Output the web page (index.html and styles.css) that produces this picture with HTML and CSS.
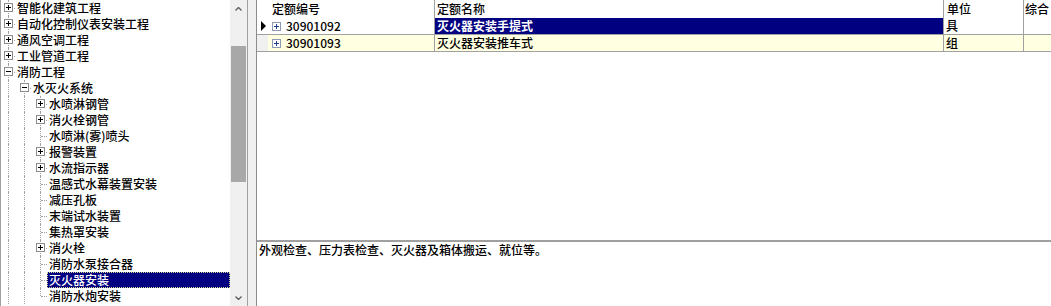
FILE: index.html
```
<!DOCTYPE html>
<html>
<head>
    <title>定额查询</title>
    <link rel="stylesheet" href="styles.css">
</head>
<body>
    <div class="app">
        <!-- chapter tree -->
        <div class="tree-pane">
            <div class="node"><span class="exp full"><span class="box plus"></span></span><span class="label">智能化建筑工程</span></div>
            <div class="node"><span class="exp full"><span class="box plus"></span></span><span class="label">自动化控制仪表安装工程</span></div>
            <div class="node"><span class="exp full"><span class="box plus"></span></span><span class="label">通风空调工程</span></div>
            <div class="node"><span class="exp full"><span class="box plus"></span></span><span class="label">工业管道工程</span></div>
            <div class="node"><span class="exp full"><span class="box minus"></span></span><span class="label">消防工程</span></div>
            <div class="node"><span class="guide"></span><span class="exp full"><span class="box minus"></span></span><span class="label">水灭火系统</span></div>
            <div class="node"><span class="guide"></span><span class="guide"></span><span class="exp full"><span class="box plus"></span></span><span class="label">水喷淋钢管</span></div>
            <div class="node"><span class="guide"></span><span class="guide"></span><span class="exp full"><span class="box plus"></span></span><span class="label">消火栓钢管</span></div>
            <div class="node"><span class="guide"></span><span class="guide"></span><span class="exp full"></span><span class="label">水喷淋(雾)喷头</span></div>
            <div class="node"><span class="guide"></span><span class="guide"></span><span class="exp full"><span class="box plus"></span></span><span class="label">报警装置</span></div>
            <div class="node"><span class="guide"></span><span class="guide"></span><span class="exp full"><span class="box plus"></span></span><span class="label">水流指示器</span></div>
            <div class="node"><span class="guide"></span><span class="guide"></span><span class="exp full"></span><span class="label">温感式水幕装置安装</span></div>
            <div class="node"><span class="guide"></span><span class="guide"></span><span class="exp full"></span><span class="label">减压孔板</span></div>
            <div class="node"><span class="guide"></span><span class="guide"></span><span class="exp full"></span><span class="label">末端试水装置</span></div>
            <div class="node"><span class="guide"></span><span class="guide"></span><span class="exp full"></span><span class="label">集热罩安装</span></div>
            <div class="node"><span class="guide"></span><span class="guide"></span><span class="exp full"><span class="box plus"></span></span><span class="label">消火栓</span></div>
            <div class="node"><span class="guide"></span><span class="guide"></span><span class="exp full"></span><span class="label">消防水泵接合器</span></div>
            <div class="node"><span class="guide"></span><span class="guide"></span><span class="exp full"></span><span class="label selected">灭火器安装</span></div>
            <div class="node"><span class="guide"></span><span class="guide"></span><span class="exp last"></span><span class="label">消防水炮安装</span></div>
        </div>

        <div class="vscroll">
            <div class="sb-btn">
                <svg width="7" height="4" viewBox="0 0 7 4"><polyline points="0.5,3.5 3.5,0.5 6.5,3.5" fill="none" stroke="#606060" stroke-width="1.4"/></svg>
            </div>
            <div class="sb-track"><div class="sb-thumb"></div></div>
            <div class="sb-btn">
                <svg width="7" height="4" viewBox="0 0 7 4"><polyline points="0.5,0.5 3.5,3.5 6.5,0.5" fill="none" stroke="#606060" stroke-width="1.4"/></svg>
            </div>
        </div>

        <div class="vsplit"></div>

        <!-- quota list + description -->
        <div class="right">
            <div class="grid">
                <div class="grow ghead">
                    <span class="cell ind"></span>
                    <span class="cell code">定额编号</span>
                    <span class="cell name">定额名称</span>
                    <span class="cell unit">单位</span>
                    <span class="cell comp">综合</span>
                </div>
                <div class="grow current">
                    <span class="cell ind"><span class="arrow"></span></span>
                    <span class="cell code"><span class="box plus blue"></span>30901092</span>
                    <span class="cell name active">灭火器安装手提式</span>
                    <span class="cell unit">具</span>
                    <span class="cell comp"></span>
                </div>
                <div class="grow alt">
                    <span class="cell ind"></span>
                    <span class="cell code"><span class="box plus blue"></span>30901093</span>
                    <span class="cell name">灭火器安装推车式</span>
                    <span class="cell unit">组</span>
                    <span class="cell comp"></span>
                </div>
            </div>
            <div class="memo">外观检查、压力表检查、灭火器及箱体搬运、就位等。</div>
        </div>
    </div>
</body>
</html>
```

FILE: styles.css
```
body {
    margin: 0;
    padding: 0;
    font-family: "Noto Sans CJK SC", "Liberation Sans", sans-serif;
    font-size: 12px;
    font-weight: 500;
    color: #000;
    background-color: #fff;
}

.app {
    display: flex;
    width: 1051px;
    height: 306px;
    overflow: hidden;
}

/* ---------- tree ---------- */

.tree-pane {
    width: 229px;
    border-left: 1px solid #a0a0a0;
    background-color: #fff;
    overflow: hidden;
}

.node {
    display: flex;
    height: 16px;
    line-height: 16px;
    white-space: nowrap;
}

.guide,
.exp {
    position: relative;
    flex: none;
}

.guide {
    width: 16px;
}

.exp {
    width: 14px;
}

/* dotted tree lines */
.guide::before,
.exp::before {
    content: "";
    position: absolute;
    left: 7px;
    top: 0;
    bottom: 0;
    border-left: 1px dotted #a0a0a0;
}

.exp.last::before {
    bottom: 8px;
}

.exp::after {
    content: "";
    position: absolute;
    left: 8px;
    right: 0;
    top: 8px;
    border-top: 1px dotted #a0a0a0;
}

.box {
    position: relative;
    z-index: 1;
    display: block;
    width: 9px;
    height: 9px;
    box-sizing: border-box;
    margin: 3px 0 0 3px;
    border: 1px solid #8c8c8c;
    background-color: #fff;
}

.box::before {
    content: "";
    position: absolute;
    left: 1px;
    top: 3px;
    width: 5px;
    height: 1px;
    background-color: #000;
}

.box.plus::after {
    content: "";
    position: absolute;
    left: 3px;
    top: 1px;
    width: 1px;
    height: 5px;
    background-color: #000;
}

.label {
    padding: 0 2px;
}

.label.selected {
    flex: 1;
    background-color: #000080;
    color: #fff;
    outline: 1px dotted #d8d890;
    outline-offset: -1px;
}

/* ---------- scrollbar ---------- */

.vscroll {
    width: 17px;
    flex: none;
    display: flex;
    flex-direction: column;
    background-color: #f0f0f0;
}

.sb-btn {
    height: 17px;
    display: flex;
    align-items: center;
    justify-content: center;
}

.sb-track {
    flex: 1;
}

.sb-thumb {
    margin: 29px 1px 0 1px;
    height: 136px;
    background-color: #a8a8a8;
}

.vsplit {
    width: 8px;
    flex: none;
    background-color: #f0f0f0;
    border-left: 1px solid #a0a0a0;
    border-right: 1px solid #8c8c8c;
}

/* ---------- grid ---------- */

.right {
    flex: 1;
    display: flex;
    flex-direction: column;
    min-width: 0;
}

.grid {
    height: 240px;
    background-color: #fff;
}

.grow {
    display: flex;
    height: 16px;
    line-height: 16px;
    border-bottom: 1px solid #a0a0a0;
    white-space: nowrap;
}

.ghead {
    height: 18px;
    line-height: 18px;
    border-bottom: none;
}

.cell {
    flex: none;
    box-sizing: border-box;
    overflow: hidden;
    border-right: 1px solid #a0a0a0;
    padding-left: 2px;
}

.cell.ind {
    width: 11px;
    padding: 0;
    border-right: none;
    position: relative;
}

.cell.code {
    width: 167px;
    display: flex;
    align-items: center;
    padding-left: 4px;
}

.cell.name {
    width: 509px;
}

.cell.unit {
    width: 80px;
}

.cell.comp {
    flex: 1;
    border-right: none;
    padding-left: 1px;
}

.ghead .cell.unit {
    padding-left: 3px;
}

.grow .box {
    margin: 0 5px 0 0;
}

.box.blue {
    border-color: #8e9bb5;
}

.box.blue::before,
.box.blue::after {
    background-color: #23408e;
}

.arrow {
    position: absolute;
    left: 4px;
    top: 3px;
    width: 0;
    height: 0;
    border-top: 5px solid transparent;
    border-bottom: 5px solid transparent;
    border-left: 5px solid #000;
}

.cell.name.active {
    background-color: #000080;
    color: #fff;
    font-weight: bold;
}

.alt .cell {
    background-color: #ffffe1;
}

.alt .cell.ind {
    background-color: #f0f0f0;
}

/* ---------- description ---------- */

.memo {
    flex: 1;
    border-top: 2px solid #a0a0a0;
    padding-left: 2px;
    line-height: 16px;
    background-color: #fff;
}
```
